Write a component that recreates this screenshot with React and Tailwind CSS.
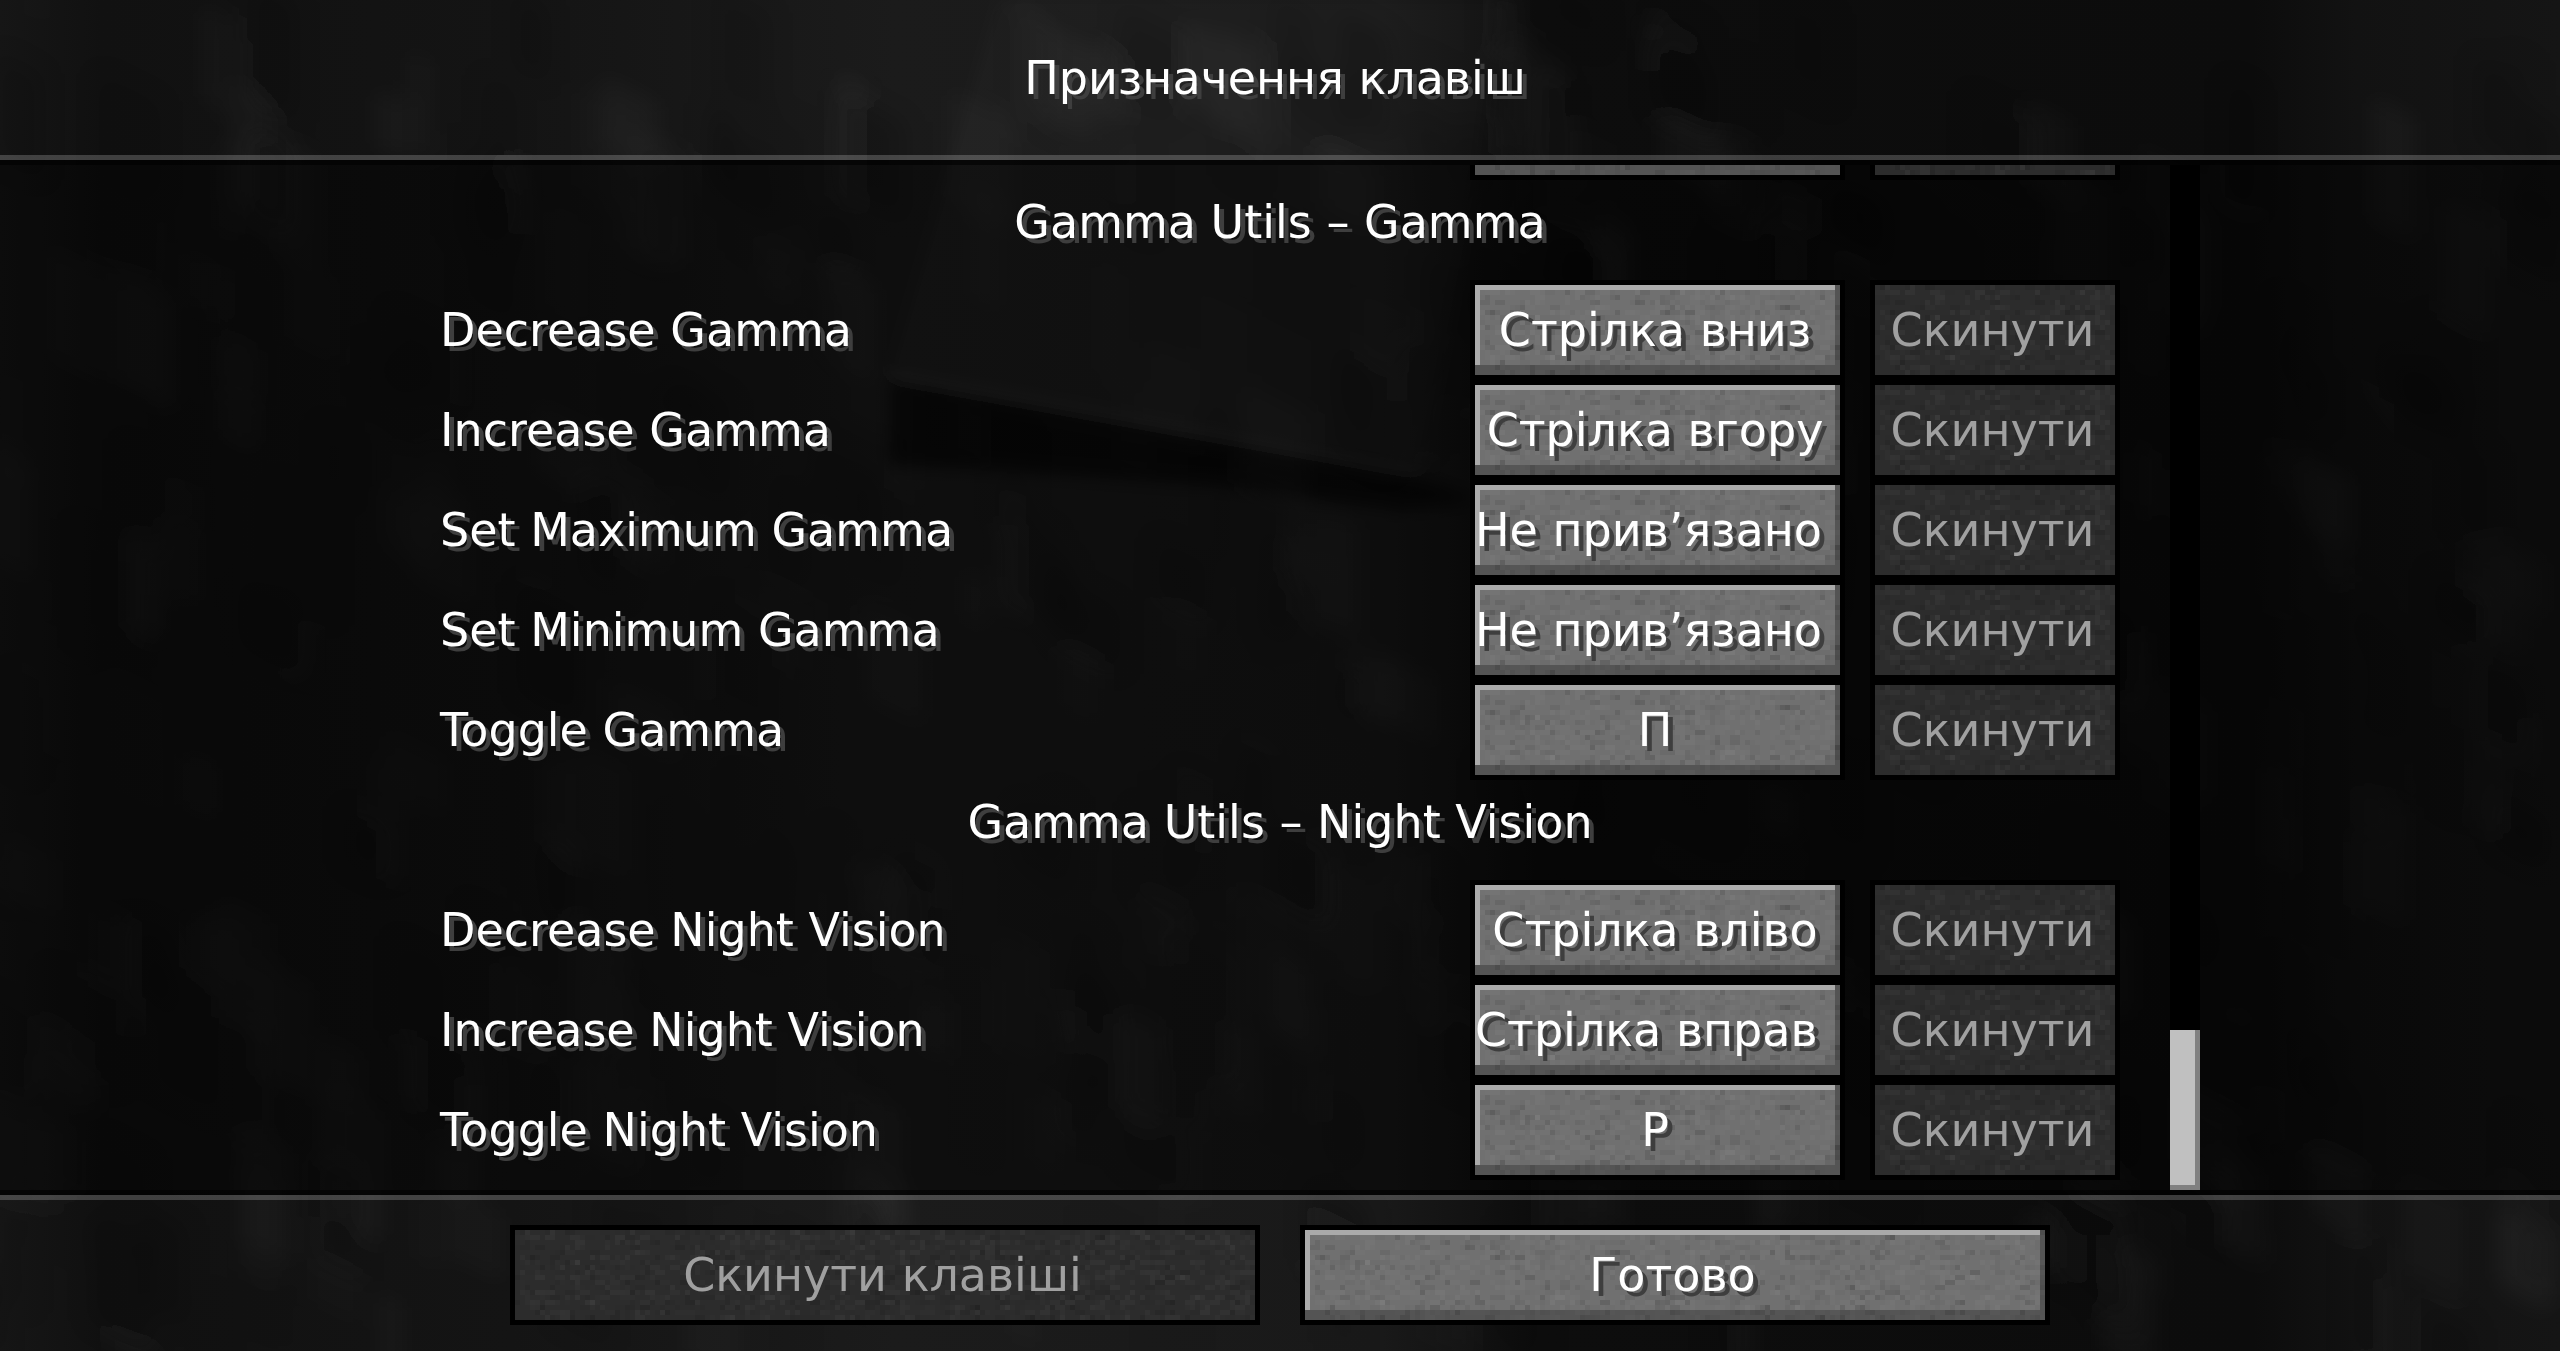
import React from "react";

function createRandom(seed) {
  let s = seed;
  return () => {
    s = (s * 1664525 + 1013904223) % 4294967296;
    return s / 4294967296;
  };
}

function makeSpeckles() {
  const rand = createRandom(71);
  const list = [];
  for (let y = 0; y < 20; y += 1) {
    for (let x = 0; x < 150; x += 1) {
      if (rand() > 0.55) {
        const wide = rand() > 0.6 ? 2 : 1;
        const light = rand() > 0.5;
        const strength = rand();
        list.push({
          x: x * 5,
          y: y * 5,
          w: wide * 5,
          light,
          o: light ? 0.01 + strength * 0.025 : 0.02 + strength * strength * 0.1,
        });
      }
    }
  }
  return list;
}

function makeBlocks() {
  const rand = createRandom(9);
  const list = [];
  for (let i = 0; i < 520; i += 1) {
    const light = rand() > 0.5;
    const x = rand() * 2560 - 40;
    const y = rand() * 1351 - 40;
    const w = 25 + rand() * 45;
    const h = 50 + rand() * 80;
    list.push({
      points: `${x},${y} ${x + w},${y + w * 0.5} ${x + w},${y + w * 0.5 + h} ${x},${y + h}`,
      light,
      o: light ? rand() * 0.028 : rand() * 0.16,
    });
  }
  return list;
}

const speckles = makeSpeckles();
const blocks = makeBlocks();

const sections = [
  {
    title: "Gamma Utils – Gamma",
    bindings: [
      { id: "gamma-down", label: "Decrease Gamma", value: "Стрілка вниз" },
      { id: "gamma-up", label: "Increase Gamma", value: "Стрілка вгору" },
      { id: "gamma-max", label: "Set Maximum Gamma", value: "Не прив’язано", alignStart: true },
      { id: "gamma-min", label: "Set Minimum Gamma", value: "Не прив’язано", alignStart: true },
      { id: "gamma-toggle", label: "Toggle Gamma", value: "П" },
    ],
  },
  {
    title: "Gamma Utils – Night Vision",
    bindings: [
      { id: "vision-down", label: "Decrease Night Vision", value: "Стрілка вліво" },
      { id: "vision-up", label: "Increase Night Vision", value: "Стрілка вправ", alignStart: true },
      { id: "vision-toggle", label: "Toggle Night Vision", value: "Р" },
    ],
  },
];

function StonePattern() {
  return (
    <svg className="absolute size-0" aria-hidden="true">
      <defs>
        <pattern id="stone" width="750" height="100" patternUnits="userSpaceOnUse">
          {speckles.map((s, i) => (
            <rect key={i} x={s.x} y={s.y} width={s.w} height="5" fill={s.light ? "#fff" : "#000"} opacity={s.o} />
          ))}
        </pattern>
      </defs>
    </svg>
  );
}

function CaveBackdrop() {
  return (
    <svg
      className="fixed inset-0 -z-10 size-full bg-[#121212]"
      viewBox="0 0 2560 1351"
      preserveAspectRatio="none"
      aria-hidden="true"
    >
      <defs>
        <filter id="soft" x="-5%" y="-5%" width="110%" height="110%">
          <feGaussianBlur stdDeviation="11" />
        </filter>
        <filter id="edge" x="-5%" y="-5%" width="110%" height="110%">
          <feGaussianBlur stdDeviation="8" />
        </filter>
        <linearGradient id="shade" x1="0" x2="1" y1="0" y2="0">
          <stop offset="0" stopColor="#161616" />
          <stop offset="0.04" stopColor="#111111" />
          <stop offset="0.2" stopColor="#141414" />
          <stop offset="0.35" stopColor="#1b1b1b" />
          <stop offset="0.54" stopColor="#191919" />
          <stop offset="0.6" stopColor="#0d0d0d" />
          <stop offset="0.88" stopColor="#0c0c0c" />
          <stop offset="0.92" stopColor="#121212" />
          <stop offset="1" stopColor="#151515" />
        </linearGradient>
      </defs>
      <rect width="2560" height="1351" fill="url(#shade)" />
      <g filter="url(#edge)">
        <path d="M1000 0 L1500 0 L1480 160 L1420 470 L890 375Z" fill="#fff" opacity="0.02" />
        <path d="M890 378 L1420 478 L1480 500 L1400 510 L1210 485 L1000 470 L890 465Z" fill="#000" opacity="0.6" />
      </g>
      <g filter="url(#soft)">
        {blocks.map((b, i) => (
          <polygon key={i} points={b.points} fill={b.light ? "#fff" : "#000"} opacity={b.o} />
        ))}
      </g>
    </svg>
  );
}

function StoneButton({ children, disabled = false, alignStart = false, className = "", ...rest }) {
  return (
    <button
      type="button"
      disabled={disabled}
      className={`relative h-[100px] overflow-hidden border-[5px] border-black text-[46px] leading-[60px] ${
        disabled ? "bg-[#2c2c2c] text-[#a0a0a0]" : "bg-[#707070] text-white"
      } ${className}`}
      {...rest}
    >
      <svg className="absolute inset-0 size-full" aria-hidden="true">
        <rect width="100%" height="100%" fill="url(#stone)" />
      </svg>
      {!disabled && (
        <span className="absolute inset-0 border-b-[10px] border-black/25">
          <span className="block size-full border-r-[5px] border-black/25">
            <span className="block size-full border-t-[5px] border-l-[5px] border-[#aaaaaa]" />
          </span>
        </span>
      )}
      <span
        className={`relative flex h-full items-center whitespace-nowrap ${
          alignStart ? "justify-start" : "justify-center pr-[5px]"
        } ${disabled ? "" : "[text-shadow:5px_5px_0_#3e3e3e]"}`}
      >
        {children}
      </span>
    </button>
  );
}

function BindingRow({ binding }) {
  return (
    <li className="flex h-[100px] shrink-0 items-center px-[10px]">
      <span id={binding.id} className="flex-1 text-[46px] leading-[60px] [text-shadow:5px_5px_0_#3e3e3e]">
        {binding.label}
      </span>
      <StoneButton className="w-[375px]" alignStart={binding.alignStart} aria-describedby={binding.id}>
        {binding.value}
      </StoneButton>
      <StoneButton className="ml-[25px] w-[250px]" disabled aria-describedby={binding.id}>
        Скинути
      </StoneButton>
    </li>
  );
}

function Section({ section }) {
  return (
    <section className="shrink-0">
      <h2 className="flex h-[100px] items-start justify-center pt-[12px] text-[46px] leading-[60px] [text-shadow:5px_5px_0_#3e3e3e]">
        {section.title}
      </h2>
      <ul>
        {section.bindings.map((b) => (
          <BindingRow key={b.id} binding={b} />
        ))}
      </ul>
    </section>
  );
}

export default function App() {
  return (
    <div className="relative isolate flex h-screen flex-col overflow-hidden font-['DejaVu_Sans',sans-serif] text-white">
      <CaveBackdrop />
      <StonePattern />
      <header className="flex h-[160px] shrink-0 items-center justify-center border-b-[5px] border-white/20 pr-[10px]">
        <h1 className="text-[46px] leading-[60px] [text-shadow:5px_5px_0_#3e3e3e]">Призначення клавіш</h1>
      </header>

      <main className="grid min-h-0 flex-1 grid-cols-[1fr_minmax(0,1700px)_1fr] border-y-[5px] border-black/60 bg-black/45">
        <div className="col-start-2 flex min-h-0 flex-col justify-end overflow-hidden pb-[10px]">
          <div className="flex h-[100px] shrink-0 justify-end px-[10px]">
            <StoneButton className="w-[375px]" aria-label="Клавіша" />
            <StoneButton className="ml-[25px] w-[250px]" disabled aria-label="Скинути" />
          </div>
          {sections.map((s) => (
            <Section key={s.title} section={s} />
          ))}
        </div>
        <div className="ml-[40px] flex w-[30px] flex-col justify-end bg-black">
          <div className="h-[160px] border-r-[5px] border-b-[5px] border-[#808080] bg-[#c0c0c0]" />
        </div>
      </main>

      <footer className="flex shrink-0 justify-center gap-[40px] border-t-[5px] border-white/20 pt-[25px] pb-[26px]">
        <StoneButton className="w-[750px]" disabled>
          Скинути клавіші
        </StoneButton>
        <StoneButton className="w-[750px]">Готово</StoneButton>
      </footer>
    </div>
  );
}
